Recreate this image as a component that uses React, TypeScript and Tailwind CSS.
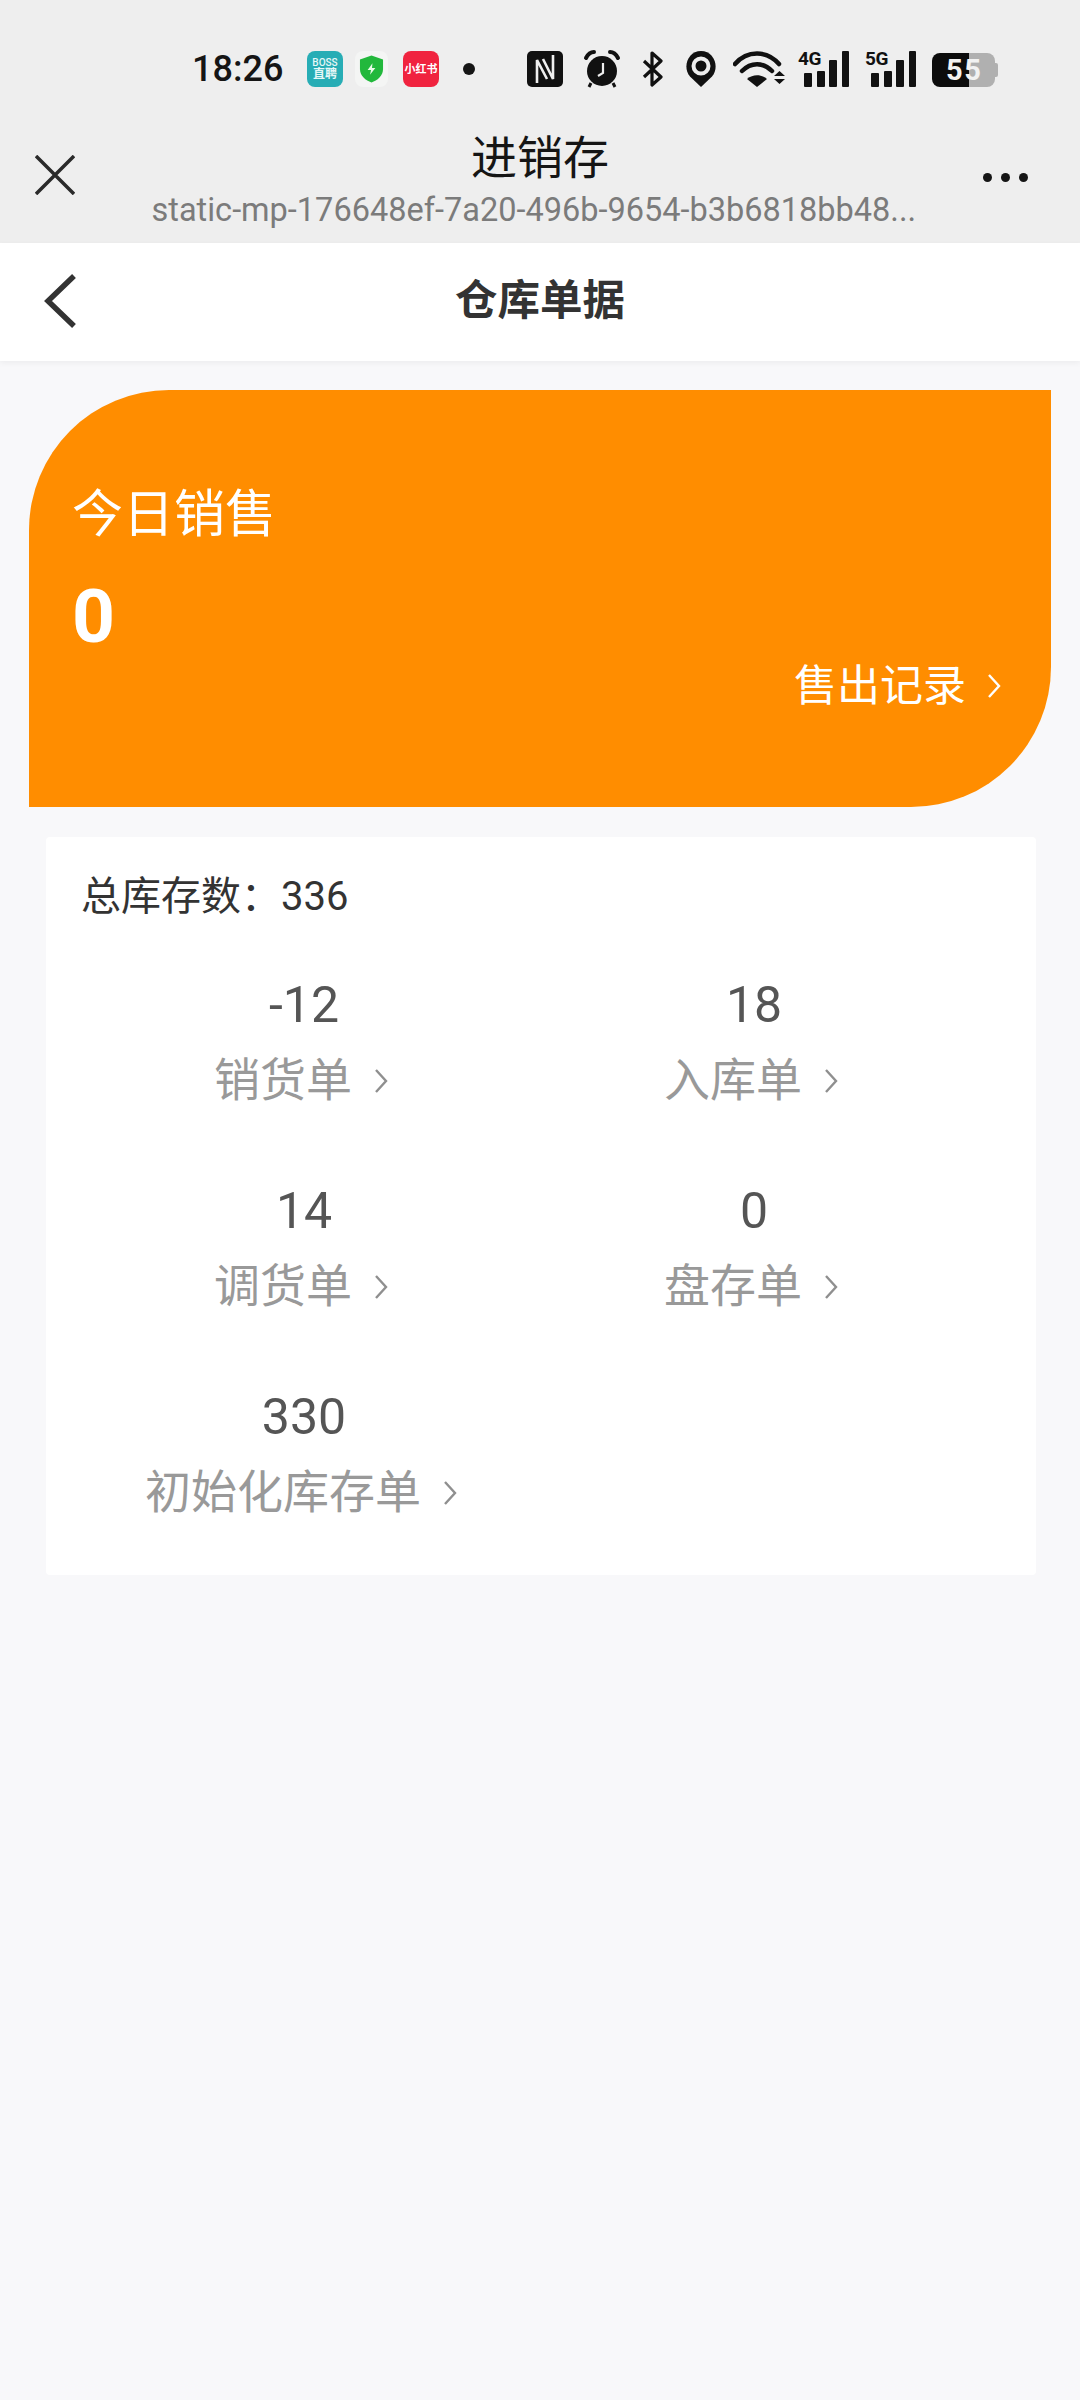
const font = "font-['Roboto','Noto_Sans_CJK_SC',sans-serif]"

const items = [
  { value: '-12', label: '销货单' },
  { value: '18', label: '入库单' },
  { value: '14', label: '调货单' },
  { value: '0', label: '盘存单' },
  { value: '330', label: '初始化库存单' },
]

function Arrow({ className }: { className: string }) {
  return (
    <svg width="14" height="24" viewBox="0 0 14 24" className={className}>
      <path d="M2 1 L12 12 L2 23" fill="none" stroke="currentColor" strokeWidth="2.4" />
    </svg>
  )
}

function Bars({ tag }: { tag: string }) {
  return (
    <div className="relative w-[51px] h-[36px]">
      <svg width="51" height="36" viewBox="0 0 51 36" className="block">
        <rect x="6" y="22" width="8" height="14" rx="1" fill="#111" />
        <rect x="19" y="20" width="8" height="16" rx="1" fill="#111" />
        <rect x="31" y="9" width="8" height="27" rx="1" fill="#111" />
        <rect x="44" y="0" width="7" height="36" rx="1" fill="#111" />
      </svg>
      <span className="absolute left-0 top-0 text-[19px] leading-[15px] font-bold text-[#111] tracking-[-0.5px]">{tag}</span>
    </div>
  )
}

function StatusBar() {
  return (
    <div className="h-[92px] pt-[51px] pl-[192px] flex items-start">
      <div className="h-[36px] flex items-center">
        <span className="text-[36px] leading-[36px] font-medium text-[#151515] w-[115px]">18:26</span>
        {/* app notification icons */}
        <div className="w-[36px] h-[36px] rounded-[8px] bg-[#27adb5] flex flex-col items-center justify-center text-[#e6f7f7] leading-none">
          <span className="text-[10px] font-medium">BOSS</span>
          <span className="text-[12px] font-bold">直聘</span>
        </div>
        <div className="ml-[12px] w-[33px] h-[36px] rounded-[8px] bg-[#f4f5f4] flex items-center justify-center">
          <svg width="25" height="30" viewBox="0 0 26 30">
            <path d="M13 1 L25 5 V15 C25 22 19 27 13 29 C7 27 1 22 1 15 V5 Z" fill="#22b83c" />
            <path d="M14 9 L9 16 H12.5 L11.5 21 L17 14 H13.5 Z" fill="#e9fbe9" />
          </svg>
        </div>
        <div className="ml-[15px] w-[36px] h-[36px] rounded-[8px] bg-[#f0233f] flex items-center justify-center text-white text-[11px] font-bold leading-none">
          小红书
        </div>
        <div className="ml-[24px] w-[12px] h-[12px] rounded-full bg-[#151515]" />
        {/* NFC */}
        <svg width="36" height="36" viewBox="0 0 36 36" className="ml-[52px]">
          <rect width="36" height="36" rx="5" fill="#111" />
          <path d="M10 32 V9 L20 28 M26 4 V28 L16 8" fill="none" stroke="#eee" strokeWidth="2.6" />
        </svg>
        {/* alarm */}
        <svg width="38" height="38" viewBox="0 0 38 38" className="ml-[20px]">
          <circle cx="19" cy="21" r="15" fill="#111" />
          <path d="M3 8 C5 4 8 2 11 2 M35 8 C33 4 30 2 27 2" fill="none" stroke="#111" strokeWidth="4" strokeLinecap="round" />
          <path d="M8 33 L6 37 M30 33 L32 37" stroke="#111" strokeWidth="3" />
          <path d="M20 13 V23 L15 26" fill="none" stroke="#eee" strokeWidth="2.2" />
        </svg>
        {/* bluetooth */}
        <svg width="21" height="36" viewBox="0 0 21 36" className="ml-[21px]">
          <path d="M2 10 L19 26 L10 34 V2 L19 10 L2 26" fill="none" stroke="#111" strokeWidth="3.2" strokeLinejoin="round" />
        </svg>
        {/* location */}
        <svg width="32" height="36" viewBox="0 0 32 36" className="ml-[22px]">
          <path d="M16 36 L5 25.500 C-3 16 3 0 16 0 C29 0 35 16 27 25.500 Z" fill="#111" />
          <circle cx="16" cy="15" r="7.500" fill="none" stroke="#eee" strokeWidth="4" />
        </svg>
        {/* wifi */}
        <svg width="52" height="36" viewBox="0 0 52 36" className="ml-[16px]">
          <path d="M2 13 C14 -1 34 -1 46 13" fill="none" stroke="#111" strokeWidth="4.5" strokeLinecap="round" />
          <path d="M9 20 C18 11 30 11 39 20" fill="none" stroke="#111" strokeWidth="4.5" strokeLinecap="round" />
          <path d="M24 36 L14 28 C20 23 28 23 34 28 Z" fill="#111" />
          <path d="M41 25 L46.500 20 L52 25 Z M41 28 H52 L46.500 33 Z" fill="#111" />
        </svg>
        <div className="ml-[13px]"><Bars tag="4G" /></div>
        <div className="ml-[16px]"><Bars tag="5G" /></div>
        {/* battery */}
        <div className="ml-[16px] relative w-[66px] h-[34px] mt-[2px]">
          <div className="absolute inset-y-0 left-0 w-[37px] bg-[#0c0c0c] rounded-l-[8px]" />
          <div className="absolute inset-y-0 left-[37px] w-[26px] bg-[#b0b0b0] rounded-r-[8px]" />
          <div className="absolute right-0 top-[10px] w-[3px] h-[14px] bg-[#b0b0b0] rounded-r-[2px]" />
          <span className="absolute left-[14px] top-0 h-[34px] flex items-center text-[29px] leading-none font-bold tracking-[1.5px] text-[#f2f2f2]">55</span>
        </div>
      </div>
    </div>
  )
}

export default function App() {
  return (
    <div className={`w-[1080px] h-[2400px] bg-[#f8f8fa] ${font}`}>
      {/* system + mini program header */}
      <div className="h-[243px] bg-[#eeeeee]">
        <StatusBar />
        <div className="relative h-[151px] flex flex-col items-center">
          <span className="mt-[38px] text-[46px] leading-[56px] text-[#151515]">进销存</span>
          <span className="mt-[4px] mr-[12px] text-[32.500px] leading-[40px] text-[#7b7b7b] w-[765px] whitespace-nowrap">static-mp-176648ef-7a20-496b-9654-b3b6818bb48...</span>
          <svg width="40" height="40" viewBox="0 0 40 40" className="absolute left-[35px] top-[63px]">
            <path d="M1 1 L39 39 M39 1 L1 39" stroke="#2a2a2a" strokeWidth="3.500" />
          </svg>
          <div className="absolute left-[983px] top-[81px] flex gap-[9px]">
            <span className="w-[9px] h-[9px] rounded-full bg-[#151515]" />
            <span className="w-[9px] h-[9px] rounded-full bg-[#151515]" />
            <span className="w-[9px] h-[9px] rounded-full bg-[#151515]" />
          </div>
        </div>
      </div>

      {/* page nav */}
      <div className="relative h-[118px] bg-white shadow-[0_2px_6px_rgba(0,0,0,0.05)] flex items-center justify-center">
        <span className="text-[42.500px] font-bold text-[#333333] leading-[56px] mb-[2px]">仓库单据</span>
        <svg width="34" height="54" viewBox="0 0 34 54" className="absolute left-[44px] top-[31px]">
          <path d="M30 2 L4 27 L30 52" fill="none" stroke="#333333" strokeWidth="5.500" />
        </svg>
      </div>

      {/* today's sales */}
      <div className="ml-[29px] mt-[29px] w-[1022px] h-[417px] bg-[#ff8d00] rounded-tl-[140px] rounded-br-[140px] pl-[43px] pr-[50px] text-white">
        <div className="pt-[94px] text-[51px] leading-[62px]">今日销售</div>
        <div className="mt-[30px] text-[75px] leading-[80px] font-bold">0</div>
        <div className="mt-[2px] flex items-center justify-end text-[43px] leading-[56px]">
          售出记录
          <Arrow className="ml-[21px]" />
        </div>
      </div>

      {/* stock card */}
      <div className="ml-[46px] mt-[30px] w-[990px] h-[738px] bg-white rounded-[4px] pt-[36px]">
        <div className="pl-[35px] text-[40px] leading-[48px] text-[#333333]">总库存数：336</div>
        <div className="mt-[54px] ml-[33px] grid grid-cols-2 w-[900px]">
          {items.map(item => (
            <div key={item.label} className="h-[206px] flex flex-col items-center">
              <span className="text-[50px] leading-[60px] text-[#555555]">{item.value}</span>
              <span className="mt-[15px] mr-[6px] flex items-center text-[46px] leading-[60px] text-[#999999]">
                {item.label}
                <Arrow className="ml-[22px] mt-[2px] text-[#8f8f8f]" />
              </span>
            </div>
          ))}
        </div>
      </div>
    </div>
  )
}
